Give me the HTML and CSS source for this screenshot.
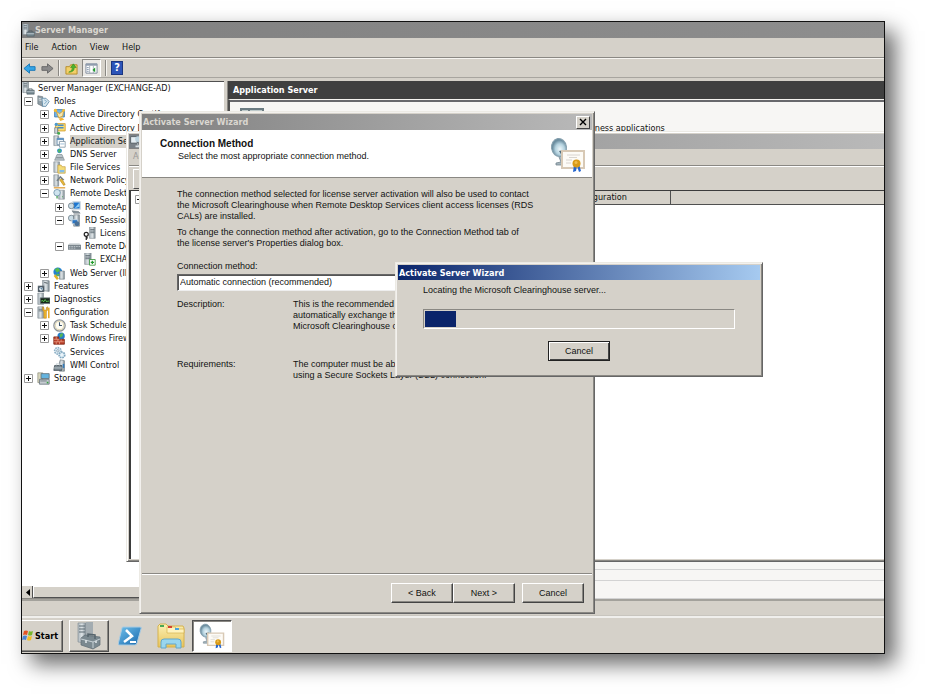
FILE: index.html
```html
<!DOCTYPE html>
<html lang="en">
<head>
<meta charset="utf-8">
<title>Server Manager</title>
<link rel="stylesheet" href="styles.css">
</head>
<body>
<svg class="defs" aria-hidden="true">
  <defs>
    <linearGradient id="gSteel" x1="0" x2="1"><stop offset="0" stop-color="#aab4ba"/><stop offset=".5" stop-color="#dfe5e8"/><stop offset="1" stop-color="#7d8a92"/></linearGradient>
    <linearGradient id="gBlue" x1="0" x2="1" y2="1"><stop offset="0" stop-color="#6fc0ea"/><stop offset="1" stop-color="#1868ae"/></linearGradient>
    <radialGradient id="gDish" cx=".55" cy=".6"><stop offset="0" stop-color="#eef8fb"/><stop offset=".6" stop-color="#b4d2df"/><stop offset="1" stop-color="#6c8ea0"/></radialGradient>
    <linearGradient id="gFold" x2="0" y2="1"><stop offset="0" stop-color="#fbf0b4"/><stop offset="1" stop-color="#e8c45c"/></linearGradient>
  </defs>
  <symbol id="manager" viewBox="0 0 16 16"><path d="M1 0h7v13H1z" fill="url(#gSteel)" stroke="#7d888e" stroke-width=".7"/><path d="M2 2h4M2 4h4M2 6h4" stroke="#56636b"/><path d="M6 10h9v5H6z" fill="#74868f" stroke="#4d5c64" stroke-width=".7"/><path d="M8.500 10V8.500h4V10" fill="none" stroke="#4d5c64"/><path d="M6 12h9" stroke="#c5d2d8"/></symbol>
  <symbol id="roles" viewBox="0 0 16 16"><path d="M1 1l6 1v12l-6-3z" fill="#8f9da5" stroke="#5d6a72" stroke-width=".7"/><path d="M2 4l4 1M2 6l4 1" stroke="#dfe6ea"/><path d="M6 4h5l4 4-4 6H7z" fill="#d9e8f0" stroke="#5b87a5"/><path d="M9 6l3 2-3 3" fill="none" stroke="#6b9fc0"/></symbol>
  <symbol id="adcs" viewBox="0 0 16 16"><path d="M2 2h12v9H2z" fill="#75b5e7" stroke="#3877ad"/><path d="M4 4l4 3 5-4-1 7-5 2z" fill="#f7e8ad" stroke="#d49a23"/><circle cx="3" cy="3" r="2" fill="#f6bc32"/><circle cx="13" cy="3" r="1.700" fill="#f6bc32"/><path d="M7 13l4-1 3 2-5 2z" fill="#f4b431"/></symbol>
  <symbol id="adds" viewBox="0 0 16 16"><path d="M3 2h12v9H3z" fill="#f8dd73" stroke="#d39a26"/><path d="M6 4h7M6 7h7" stroke="#4a8cc2" stroke-width="2"/><circle cx="4" cy="3" r="2" fill="#4a9ad4"/><path d="M2 7h4v7H2z" fill="url(#gSteel)" stroke="#566168" stroke-width=".6"/><circle cx="7" cy="14" r="1.800" fill="#3fa84b"/></symbol>
  <symbol id="appsrv" viewBox="0 0 16 16"><path d="M1 1h6v12H1z" fill="url(#gSteel)" stroke="#7d888e" stroke-width=".7"/><path d="M5 4h8v8H5z" fill="#eef4f8" stroke="#6489a8"/><path d="M5 5h8" stroke="#4f8ac0" stroke-width="2"/><path d="M8 8h7v7H8z" fill="#fff" stroke="#8296a5"/><path d="M9 11h5" stroke="#8ab2d0"/></symbol>
  <symbol id="dns" viewBox="0 0 16 16"><circle cx="8" cy="3.500" r="3" fill="#2d91cc"/><path d="M6 3l2-2 2 3-3 2z" fill="#55b661"/><path d="M5 8h6l3 7H2z" fill="#bac4ca" stroke="#7a868d" stroke-width=".8"/><path d="M4 12h8" stroke="#6b777e"/></symbol>
  <symbol id="files" viewBox="0 0 16 16"><path d="M1 1h7v13H1z" fill="url(#gSteel)" stroke="#7d888e" stroke-width=".7"/><path d="M6 5h4l1 2h4v8H6z" fill="#f5dc78" stroke="#c39b36" stroke-width=".8"/><path d="M8 11h6v3H8z" fill="#83bce7"/></symbol>
  <symbol id="nap" viewBox="0 0 16 16"><path d="M1 1h6v14H1z" fill="url(#gSteel)" stroke="#7d888e" stroke-width=".7"/><path d="M4 8l5-6 5 5-2 1-3-3-3 4z" fill="#768188"/><path d="M8 7l5 7 2-1-4-7z" fill="#e6b73b" stroke="#a57a16" stroke-width=".6"/></symbol>
  <symbol id="remote" viewBox="0 0 16 16"><path d="M1 1h14" stroke="#dd9a32" stroke-width="1.500"/><path d="M7 4h7v11H7z" fill="url(#gSteel)" stroke="#7d888e" stroke-width=".7"/><circle cx="5" cy="7" r="4" fill="#cfe3ee" stroke="#6c91a7"/><path d="M5 11v3M11 12h1" stroke="#3c9c4a" stroke-width="1.500"/></symbol>
  <symbol id="rdapp" viewBox="0 0 16 16"><path d="M6 1h9v9H6z" fill="#1c76d1" stroke="#cdd8df" stroke-width="1.500"/><path d="M8 9l6-7v5z" fill="#8ccbf5"/><circle cx="4" cy="6" r="3.500" fill="#cbdde6" stroke="#70808a"/><path d="M5 12l8 1 2 2H7z" fill="#8c98a0" stroke="#59656c" stroke-width=".6"/></symbol>
  <symbol id="rdsession" viewBox="0 0 16 16"><circle cx="4" cy="5" r="3.500" fill="#cbdde6" stroke="#70808a"/><path d="M7 1h7v14H7z" fill="url(#gSteel)" stroke="#606d75" stroke-width=".7"/><path d="M5 7h7v5H5z" fill="#2a75c4" stroke="#d4dee4"/><circle cx="11" cy="12" r="3" fill="#486f96"/></symbol>
  <symbol id="licensing" viewBox="0 0 16 16"><path d="M8 0h7v14H8z" fill="url(#gSteel)" stroke="#7d888e" stroke-width=".7"/><path d="M9 3h5M9 5h5M9 7h5" stroke="#56636b"/><circle cx="4" cy="9" r="2.500" fill="#fff" stroke="#242424" stroke-width="1.500"/><path d="M4 11v5M4 13.500h2" stroke="#242424" stroke-width="1.500"/></symbol>
  <symbol id="rack" viewBox="0 0 16 16"><path d="M0 6l2-2h12l2 2z" fill="#d1d6d9"/><path d="M0 6h16v6H0z" fill="#7b868d"/><path d="M1 8h14M1 10h9" stroke="#c6ced3" stroke-dasharray="2 1"/></symbol>
  <symbol id="serverok" viewBox="0 0 16 16"><path d="M2 0h8v14H2z" fill="url(#gSteel)" stroke="#7d888e" stroke-width=".7"/><path d="M3 3h6M3 5h6M3 7h6" stroke="#56636b"/><path d="M8 8h7v7H8z" fill="#fff" stroke="#35933a"/><path d="M11.500 9.500v4M9.500 11.500h4" stroke="#209c2c" stroke-width="1.500"/></symbol>
  <symbol id="web" viewBox="0 0 16 16"><circle cx="6" cy="6" r="5.500" fill="#2280cf"/><path d="M2 3l4-2 3 3-4 3zM4 8l4 1-2 3z" fill="#58bc4a"/><path d="M2 10l4 5" stroke="#e1b428" stroke-width="3"/><path d="M8 5h6v10H8z" fill="url(#gSteel)" stroke="#65737c" stroke-width=".7"/></symbol>
  <symbol id="features" viewBox="0 0 16 16"><path d="M7 0l8 1v13l-8-1z" fill="url(#gSteel)" stroke="#606c74" stroke-width=".7"/><path d="M9 3l4 1" stroke="#384349"/><path d="M1 7h8v8H1z" fill="#5d6970"/><circle cx="5" cy="11" r="3" fill="#edf3f6" stroke="#26384a"/><path d="M5 9v2h2" fill="none" stroke="#20567d"/></symbol>
  <symbol id="diag" viewBox="0 0 16 16"><path d="M1 0h7v14H1z" fill="url(#gSteel)" stroke="#7d888e" stroke-width=".7"/><path d="M4 6h12v7H4z" fill="#17271b" stroke="#69757b"/><path d="M5 10l2-1 1 2 2-3 2 3 1-1h2" fill="none" stroke="#61da5a"/></symbol>
  <symbol id="config" viewBox="0 0 16 16"><path d="M1 1h7v14H1z" fill="url(#gSteel)" stroke="#7d888e" stroke-width=".7"/><path d="M2 4h5M2 6h5" stroke="#56636b"/><path d="M7 1v4l1.500 2v8h3V7L13 5V1l-1.500 1v3h-3V2z" fill="#f0b72e" stroke="#bd8315" stroke-width=".7"/><path d="M14.500 2v13" stroke="#e9a926" stroke-width="2"/></symbol>
  <symbol id="clock" viewBox="0 0 16 16"><circle cx="8" cy="8" r="7" fill="#f3f0e3" stroke="#8d9398" stroke-width="1.500"/><circle cx="8" cy="8" r="5" fill="#fffdf5" stroke="#d9cfa8"/><path d="M8 4v4h3" fill="none" stroke="#39526c" stroke-width="1.300"/></symbol>
  <symbol id="firewall" viewBox="0 0 16 16"><circle cx="10" cy="5" r="4.500" fill="#257bcc"/><path d="M8 3l4-2v4l-3 2z" fill="#55b654"/><path d="M1 6h6v3h7v6H1z" fill="#bb4029" stroke="#7d2919"/><path d="M1 9h7M1 12h13M4 6v3M6 9v3M10 9v3M4 12v3M8 12v3" stroke="#edaa93" stroke-width=".8"/></symbol>
  <symbol id="services" viewBox="0 0 16 16"><circle cx="6" cy="6" r="4" fill="#e4f1f8" stroke="#91b2c7" stroke-width="2" stroke-dasharray="2 1"/><circle cx="6" cy="6" r="1.500" fill="#fff" stroke="#7798ad"/><circle cx="11" cy="11" r="3.500" fill="#dcecf5" stroke="#80a6be" stroke-width="2" stroke-dasharray="2 1"/><circle cx="11" cy="11" r="1" fill="#fff"/></symbol>
  <symbol id="wmi" viewBox="0 0 16 16"><path d="M9 1l5 1v13H8V4z" fill="url(#gSteel)" stroke="#5c6870" stroke-width=".7"/><path d="M2 8h9v6H1z" fill="#79878f" stroke="#46525a"/><path d="M4 8V6h4v2M1 11h10" fill="none" stroke="#c2ccd1"/><path d="M12 6h2v5h-2z" fill="#337bba"/></symbol>
  <symbol id="storage" viewBox="0 0 16 16"><path d="M1 1h6v12H1z" fill="#d9d7bd" stroke="#777966" stroke-width=".7"/><path d="M5 2h10v6H5z" fill="#65b4df" stroke="#61717a"/><path d="M3 9h12v6H3z" fill="#c5cbd0" stroke="#68747b"/><path d="M4 11h8" stroke="#69757b"/><path d="M12 13h2" stroke="#36a040" stroke-width="2"/></symbol>
  <symbol id="mmc" viewBox="0 0 16 16"><path d="M0 0h16v16H0z" fill="#7a8187"/><path d="M2 2h8v8H2z" fill="#e6eef2" stroke="#4c555b"/><circle cx="11" cy="5" r="3.500" fill="#bcd3df"/><path d="M9 8l2 5H8v2h7v-2h-3" fill="#d7dfe3"/></symbol>
  <symbol id="dish" viewBox="0 0 36 36"><path d="M9 20l2 5-5 1v2h10v-2l-3-2-1-7" fill="#a5b5bd" stroke="#74858f" stroke-width=".8"/><ellipse cx="9" cy="10.500" rx="7.500" ry="9" fill="url(#gDish)" stroke="#86a0ae" transform="rotate(-8 9 10.500)"/><path d="M9 14l5-1-2 6z" fill="#516b79"/><path d="M12 14h22v17H12z" fill="#fdfbf6" stroke="#d8c9b5" stroke-width="2"/><path d="M17 18h13M19 20.500h8M16 23h6M16 26h5" stroke="#cfccc6" stroke-width=".8"/><path d="M24 28l-1 7 3-1 1-5 2 6 2-1-2-7z" fill="#2465ce"/><circle cx="26.500" cy="26.500" r="4" fill="#d89a18"/><circle cx="26" cy="25.500" r="1.500" fill="#f0bd4a"/></symbol>
  <symbol id="toolbox" viewBox="0 0 28 28"><path d="M3 1h8v20l-8-1z" fill="url(#gSteel)" stroke="#8b9499" stroke-width=".7"/><path d="M4 4h6M4 7h6M4 10h6" stroke="#5d6a72"/><path d="M11 0h7v14h-7z" fill="#a3acb1"/><path d="M6 16l4-3 15 2v8l-7 4-12-4z" fill="#7b8990" stroke="#5f6c74" stroke-width=".7"/><path d="M6 17l12 3 7-3M18 20v6" fill="none" stroke="#c6d0d5"/><path d="M13 15v-3l7 1v4" fill="none" stroke="#56646c" stroke-width="1.500"/><path d="M11 18v3M21 19v2" stroke="#e4e9ec" stroke-width="1.500"/></symbol>
  <symbol id="flag" viewBox="0 0 12 12"><path d="M2 1q2-1 4 0L5 5Q3 4 1 5z" fill="#e35224"/><path d="M7 1q2 1 4 0l-1 4q-2 1-4 0z" fill="#77b62e"/><path d="M1 6q2-1 4 0l-1 4q-2-1-4 0z" fill="#4a83d2"/><path d="M6 6q2 1 4 0l-1 4q-2 1-4 0z" fill="#f2bd25"/></symbol>
  <symbol id="psh" viewBox="0 0 24 22"><path d="M5 2h17q2 0 1 2l-4 14q-.5 2-2 2H1q-1 0-.6-2L4 3q.3-1 1-1z" fill="url(#gBlue)" stroke="#a9cbe2"/><path d="M8 5l6 6-8 6" fill="none" stroke="#fff" stroke-width="2.500"/><path d="M12 17h6" stroke="#fff" stroke-width="2"/></symbol>
  <symbol id="explorer" viewBox="0 0 28 26"><path d="M1 3l2-2h6l2 2h15l1 2v19H1z" fill="url(#gFold)" stroke="#d5b14d"/><path d="M10 4h8l2 2h7v4H10z" fill="#fff3bd" stroke="#d5b14d" stroke-width=".7"/><path d="M3 3h4" stroke="#49a756" stroke-width="2"/><path d="M11 4h4" stroke="#d64130" stroke-width="2"/><path d="M18 6h4" stroke="#49a2dc" stroke-width="2"/><path d="M4 25v-6q0-3 3-3h14q3 0 3 3v6h-5v-4H9v4z" fill="#99d6ef" stroke="#62a7cb"/></symbol>
  <symbol id="arrow" viewBox="0 0 14 12"><path d="M1 6l6-5v3h6v4H7v3z"/></symbol>
  <symbol id="up" viewBox="0 0 14 14"><path d="M1 5h4l1-2h7v10H1z" fill="#f2d069" stroke="#b68d29"/><path d="M4 11q4-1 4-5H6l3-4 3 4h-2q0 5-6 5z" fill="#4bb52e" stroke="#2a851a" stroke-width=".6"/></symbol>
  <symbol id="console" viewBox="0 0 14 12"><path d="M1 1h12v10H1z" fill="#fff" stroke="#7a8698"/><path d="M1 2h12" stroke="#8f9cad" stroke-width="2"/><path d="M5 3v8M9 3v8" stroke="#a8b1ba"/><path d="M2 5h2M2 7h2M2 9h2" stroke="#8296ab"/><path d="M11 5v5L8 7.500z" fill="#1f9a2c"/></symbol>
  <symbol id="plus" viewBox="0 0 9 9"><path d="M.5.500h8v8h-8z" fill="#fff" stroke="#9a9a9a"/><path d="M2 4.500h5M4.500 2v5" stroke="#111"/></symbol>
  <symbol id="minus" viewBox="0 0 9 9"><path d="M.5.500h8v8h-8z" fill="#fff" stroke="#9a9a9a"/><path d="M2 4.500h5" stroke="#111"/></symbol>
</svg>

<main class="screen">
  <header class="titlebar inactive main-title"><svg class="icon"><use href="#manager"/></svg><h1>Server Manager</h1></header>
  <nav class="menubar"><button>File</button><button>Action</button><button>View</button><button>Help</button></nav>
  <div class="toolbar">
    <button class="tool" aria-label="Back"><svg class="icon back"><use href="#arrow"/></svg></button>
    <button class="tool" aria-label="Forward"><svg class="icon forward"><use href="#arrow"/></svg></button>
    <span class="sep"></span>
    <button class="tool" aria-label="Up"><svg class="icon"><use href="#up"/></svg></button>
    <button class="tool pressed" aria-label="Console tree"><svg class="icon"><use href="#console"/></svg></button>
    <span class="sep"></span>
    <button class="tool help" aria-label="Help">?</button>
  </div>

  <div class="workspace">
    <section class="tree-pane">
      <ul class="tree">
        <li class="l0"><svg class="icon"><use href="#manager"/></svg><span>Server Manager (EXCHANGE-AD)</span></li>
        <li class="l1"><svg class="tog"><use href="#minus"/></svg><svg class="icon"><use href="#roles"/></svg><span>Roles</span></li>
        <li class="l2"><svg class="tog"><use href="#plus"/></svg><svg class="icon"><use href="#adcs"/></svg><span>Active Directory Certif</span></li>
        <li class="l2"><svg class="tog"><use href="#plus"/></svg><svg class="icon"><use href="#adds"/></svg><span>Active Directory D</span></li>
        <li class="l2"><svg class="tog"><use href="#plus"/></svg><svg class="icon"><use href="#appsrv"/></svg><span class="selected">Application Server</span></li>
        <li class="l2"><svg class="tog"><use href="#plus"/></svg><svg class="icon"><use href="#dns"/></svg><span>DNS Server</span></li>
        <li class="l2"><svg class="tog"><use href="#plus"/></svg><svg class="icon"><use href="#files"/></svg><span>File Services</span></li>
        <li class="l2"><svg class="tog"><use href="#plus"/></svg><svg class="icon"><use href="#nap"/></svg><span>Network Policy</span></li>
        <li class="l2"><svg class="tog"><use href="#minus"/></svg><svg class="icon"><use href="#remote"/></svg><span>Remote Desktop</span></li>
        <li class="l3"><svg class="tog"><use href="#plus"/></svg><svg class="icon"><use href="#rdapp"/></svg><span>RemoteApp</span></li>
        <li class="l3"><svg class="tog"><use href="#minus"/></svg><svg class="icon"><use href="#rdsession"/></svg><span>RD Session</span></li>
        <li class="l4"><svg class="icon"><use href="#licensing"/></svg><span>Licensing</span></li>
        <li class="l3"><svg class="tog"><use href="#minus"/></svg><svg class="icon"><use href="#rack"/></svg><span>Remote Desktops</span></li>
        <li class="l4"><svg class="icon"><use href="#serverok"/></svg><span>EXCHANGE</span></li>
        <li class="l2"><svg class="tog"><use href="#plus"/></svg><svg class="icon"><use href="#web"/></svg><span>Web Server (IIS)</span></li>
        <li class="l1"><svg class="tog"><use href="#plus"/></svg><svg class="icon"><use href="#features"/></svg><span>Features</span></li>
        <li class="l1"><svg class="tog"><use href="#plus"/></svg><svg class="icon"><use href="#diag"/></svg><span>Diagnostics</span></li>
        <li class="l1"><svg class="tog"><use href="#minus"/></svg><svg class="icon"><use href="#config"/></svg><span>Configuration</span></li>
        <li class="l2"><svg class="tog"><use href="#plus"/></svg><svg class="icon"><use href="#clock"/></svg><span>Task Scheduler</span></li>
        <li class="l2"><svg class="tog"><use href="#plus"/></svg><svg class="icon"><use href="#firewall"/></svg><span>Windows Firewall</span></li>
        <li class="l2"><i class="tog"></i><svg class="icon"><use href="#services"/></svg><span>Services</span></li>
        <li class="l2"><i class="tog"></i><svg class="icon"><use href="#wmi"/></svg><span>WMI Control</span></li>
        <li class="l1"><svg class="tog"><use href="#plus"/></svg><svg class="icon"><use href="#storage"/></svg><span>Storage</span></li>
      </ul>
      <div class="hscroll"><button aria-label="Scroll left"><svg viewBox="0 0 5 7"><path d="M5 0v7L1 3.500z"/></svg></button><span class="thumb"></span></div>
    </section>
    <section class="detail">
      <h2>Application Server</h2>
      <div class="summary">
        <svg class="icon summary-icon" viewBox="0 0 24 24"><path d="M0 1h24v22H0z" fill="#6c7c82"/><path d="M2 4h6M10 4h12" stroke="#bdc9ca" stroke-width="2"/></svg>
        <p>business applications</p>
      </div>
      <div class="detail-foot"><span></span><span></span><span></span></div>
    </section>
  </div>
  <div class="statusbar"></div>

  <footer class="taskbar">
    <button class="start"><svg class="icon"><use href="#flag"/></svg>Start</button>
    <button class="task raised" aria-label="Server Manager"><svg class="icon"><use href="#toolbox"/></svg></button>
    <button class="task" aria-label="PowerShell"><svg class="icon ps"><use href="#psh"/></svg></button>
    <button class="task" aria-label="Explorer"><svg class="icon"><use href="#explorer"/></svg></button>
    <button class="task active" aria-label="Licensing Manager"><svg class="icon small"><use href="#dish"/></svg></button>
  </footer>

  <section class="window licensing">
    <header class="titlebar inactive"><svg class="icon"><use href="#mmc"/></svg></header>
    <div class="lic-menu">Action</div>
    <div class="lic-tools"><button aria-label="Refresh"></button></div>
    <div class="lic-body">
      <div class="lic-tree"><svg class="tog"><use href="#minus"/></svg></div>
      <table class="grid"><thead><tr><th>Configuration</th><th></th></tr></thead></table>
    </div>
  </section>

  <section class="window wizard" aria-label="Activate Server Wizard">
    <header class="titlebar inactive"><h2>Activate Server Wizard</h2><button class="close" aria-label="Close"><svg viewBox="0 0 8 8"><path d="M1 1l6 6M7 1L1 7" stroke="#000" stroke-width="1.400"/></svg></button></header>
    <div class="banner">
      <div><h3>Connection Method</h3><p>Select the most appropriate connection method.</p></div>
      <svg class="icon"><use href="#dish"/></svg>
    </div>
    <form class="wizard-body">
      <p>The connection method selected for license server activation will also be used to contact<br>the Microsoft Clearinghouse when Remote Desktop Services client access licenses (RDS<br>CALs) are installed.</p>
      <p>To change the connection method after activation, go to the Connection Method tab of<br>the license server's Properties dialog box.</p>
      <label for="method">Connection method:</label>
      <select id="method"><option>Automatic connection (recommended)</option></select>
      <dl>
        <dt>Description:</dt><dd>This is the recommended method. The server will<br>automatically exchange the information with the<br>Microsoft Clearinghouse over the Internet.</dd>
        <dt>Requirements:</dt><dd>The computer must be able to connect to the Internet<br>using a Secure Sockets Layer (SSL) connection.</dd>
      </dl>
    </form>
    <div class="wizard-foot"><button class="btn">&lt; Back</button><button class="btn">Next &gt;</button><button class="btn apart">Cancel</button></div>
  </section>

  <section class="window progress-window" aria-label="Activate Server Wizard progress">
    <header class="titlebar current"><h2>Activate Server Wizard</h2></header>
    <div class="progress-body">
      <label for="bar">Locating the Microsoft Clearinghouse server...</label>
      <progress id="bar" max="100" value="10"></progress>
      <button class="btn default">Cancel</button>
    </div>
  </section>
</main>
</body>
</html>
```
FILE: styles.css
```css
:root {
  --face: #d5d1c9;
  --light: #f6f4f0;
  --shade: #8a8883;
  --dark: #505050;
  --ui: "DejaVu Sans Condensed", "DejaVu Sans", sans-serif;
  --dialog: "Liberation Sans", sans-serif;
}
* { box-sizing: border-box; }
body {
  margin: 0;
  min-height: 100vh;
  padding: 21px 42px 42px 21px;
  display: flex;
  background: #fff;
  font: 9px/13px var(--ui);
  color: #111;
}
h1, h2, h3, p, ul, dl, dd { margin: 0; padding: 0; }
button, select { font: inherit; color: inherit; }
button { padding: 0; border: 0; background: none; }
.defs { position: absolute; width: 0; height: 0; }
.icon { flex: none; width: 13px; height: 13px; display: block; }

.screen {
  flex: 1;
  position: relative;
  display: flex;
  flex-direction: column;
  border: 1px solid #111;
  background: var(--face);
  box-shadow: 10px 10px 20px 0 rgba(0, 0, 0, .6);
}
.titlebar { display: flex; align-items: center; height: 16px; flex: none; }
.titlebar h1, .titlebar h2 { padding-left: 1px; font: bold 9px/14px var(--ui); }
.inactive { background: linear-gradient(90deg, #808080, #b9b9b9); color: #dad7d0; }
.current { background: linear-gradient(90deg, #0a246a, #a6caf0); color: #fff; }
.main-title { background: linear-gradient(90deg, #808080, #8e8e8e); }
.main-title h1 { padding-left: 0; }

.menubar { display: flex; height: 20px; padding-left: 3px; gap: 13px; border-bottom: 1px solid var(--shade); }
.toolbar {
  display: flex;
  align-items: center;
  height: 20px;
  gap: 4px;
  border-top: 1px solid var(--light);
  border-bottom: 1px solid #a8a59f;
}
.tool { display: flex; align-items: center; justify-content: center; width: 14px; height: 18px; }
.back { fill: #35a5e6; stroke: #1777b8; }
.forward { fill: #8a8a8a; stroke: #666; transform: scaleX(-1); }
.sep { width: 2px; height: 16px; border-left: 1px solid var(--shade); border-right: 1px solid var(--light); }
.pressed { width: 19px; background: #eceae6; border: 1px solid; border-color: var(--shade) #fff #fff var(--shade); }
.help { height: 14px; width: 12px; background: #2c54b8; border: 1px solid #1a3580; color: #fff; font: bold 11px/12px var(--ui); }

.workspace { flex: 1; display: flex; gap: 3px; padding-top: 3px; min-height: 0; }
.tree-pane { width: 202px; display: flex; flex-direction: column; background: #fff; border-top: 1px solid var(--dark); overflow: hidden; }
.tree { display: grid; grid-auto-rows: 1fr; height: 303px; list-style: none; white-space: nowrap; }
.tree li { display: flex; align-items: center; gap: 4px; min-height: 0; }
.tree .l0 { gap: 3px; }
.l1 { padding-left: 2px; }
.l2 { padding-left: 18px; }
.l3 { padding-left: 33px; }
.l4 { padding-left: 61px; }
.tog { flex: none; width: 9px; height: 9px; display: block; }
.selected { background: var(--face); }
.hscroll { margin-top: auto; height: 13px; display: flex; background: var(--face); border-bottom: 1px solid var(--shade); }
.hscroll button { width: 11px; display: flex; align-items: center; justify-content: center; border-right: 1px solid var(--dark); }
.hscroll svg { width: 5px; height: 7px; }
.thumb { flex: 1; border: 1px solid; border-color: #fff var(--dark) var(--dark) #fff; }

.detail { flex: 1; display: flex; flex-direction: column; border-left: 1px solid var(--shade); background: #f7f6f4; }
.detail h2 { height: 18px; padding-left: 5px; background: #404040; color: #fff; font: bold 9px/18px var(--ui); }
.summary { flex: 1; border-top: 1px solid var(--light); border-left: 2px solid var(--dark); padding-left: 10px; display: flex; gap: 314px; box-shadow: inset 0 2px #68686c; }
.summary-icon { width: 24px; height: 24px; margin-top: 7px; }
.summary p { margin-top: 22px; }
.detail-foot { height: 40px; display: grid; grid-template-rows: 11px 11px 1fr; }
.detail-foot span { border-bottom: 1px solid #d3d3d3; }
.statusbar { height: 17px; border-top: 2px solid #a3a19b; border-bottom: 1px solid #c8c5be; }

.taskbar { display: flex; align-items: center; height: 37px; border-top: 2px solid #f0efec; }
.task { display: flex; align-items: center; justify-content: center; width: 40px; height: 32px; margin-right: 1px; }
.task .icon { width: 28px; height: 28px; }
.task .ps { width: 24px; height: 24px; }
.task .small { width: 26px; height: 26px; }
.start { display: flex; align-items: center; gap: 1px; width: 41px; height: 32px; margin-right: 6px; font: bold 9px/14px var(--ui); color: #000; }
.start .icon { width: 12px; height: 12px; }
.start, .raised { border: 1px solid; border-color: #fff var(--dark) var(--dark) #fff; box-shadow: inset -1px -1px var(--shade); }
.start { border-left: 0; }
.active { background: #fff; border: 1px solid; border-color: var(--dark) #fff #fff var(--dark); box-shadow: inset 1px 1px var(--shade); }

.window {
  position: absolute;
  display: flex;
  flex-direction: column;
  background: var(--face);
  border: 1px solid;
  border-color: #eceae4 #666 #666 #eceae4;
  padding: 2px;
  box-shadow: inset 1px 1px #f3f1ee, inset -1px -1px var(--shade);
}
.licensing { left: 104px; top: 109px; right: 0; height: 431px; border-right: 0; padding-right: 0; box-shadow: inset 1px 1px #fff, inset 0 -1px var(--shade); }
.licensing .titlebar { height: 15px; }
.lic-menu { height: 17px; padding: 1px 4px; color: #999; border-bottom: 1px solid var(--shade); }
.lic-tools { height: 24px; padding: 2px 4px; border-top: 1px solid #fff; }
.lic-tools button { width: 20px; height: 20px; border: 1px solid; border-color: #fff var(--dark) var(--dark) #fff; }
.lic-body { flex: 1; display: flex; background: #fff; border-top: 1px solid #3c3c3c; border-left: 2px solid #3c3c3c; }
.lic-tree { width: 320px; padding: 4px; }
.grid { flex: 1; align-self: flex-start; border-collapse: collapse; table-layout: fixed; background: var(--face); }
.grid th { height: 13px; padding: 0; font-weight: normal; line-height: 12px; text-align: left; border-bottom: 1px solid var(--dark); }
.grid th:first-child { width: 219px; padding-left: 121px; border-right: 1px solid var(--dark); }

.wizard { left: 117px; top: 89px; width: 456px; height: 503px; font: 9px/11px var(--dialog); }
.close { margin-left: auto; margin-right: 2px; width: 14px; height: 13px; display: flex; align-items: center; justify-content: center; background: var(--face); border: 1px solid; border-color: #fff #444 #444 #fff; }
.close svg { width: 8px; height: 8px; }
.banner { display: flex; justify-content: space-between; height: 48px; padding: 7px 6px 0 18px; background: #fff; border-bottom: 1px solid var(--shade); }
.banner h3 { font: bold 10px/13px var(--dialog); }
.banner p { padding-left: 18px; line-height: 12px; }
.banner .icon { width: 36px; height: 36px; }
.wizard-body { flex: 1; display: flex; flex-direction: column; padding: 11px 24px 0 35px; white-space: nowrap; }
.wizard-body p { margin-bottom: 5px; }
.wizard-body label { margin-top: 6px; line-height: 12px; }
.wizard-body select { appearance: none; height: 17px; margin-top: 2px; padding: 0 2px; border: 1px solid; border-color: #666 #eee #eee #666; border-radius: 0; background: #fff; box-shadow: inset 1px 1px #555; }
.wizard-body dl { display: grid; grid-template-columns: 116px 1fr; grid-template-rows: 60px auto; margin-top: 8px; }
.wizard-foot { display: flex; justify-content: flex-end; height: 38px; padding: 9px 8px 0; border-top: 1px solid var(--shade); box-shadow: inset 0 1px #fff; }
.btn { width: 62px; height: 20px; border: 1px solid; border-color: #fff #444 #444 #fff; box-shadow: inset -1px -1px var(--shade); }
.apart { margin-left: 7px; }

.progress-window { left: 373px; top: 240px; width: 368px; height: 115px; font: 9px/12px var(--dialog); }
.progress-window .titlebar { height: 15px; }
.progress-body { display: flex; flex-direction: column; padding: 4px 25px 0; }
progress { appearance: none; width: 100%; height: 20px; margin: 13px 0 12px; border: 1px solid; border-color: var(--shade) #fff #fff var(--shade); padding: 1px; background: var(--face); }
progress::-webkit-progress-bar { background: var(--face); }
progress::-webkit-progress-value { background: #0a246a; }
.default { align-self: center; border-color: #222; box-shadow: inset 1px 1px #fff, inset -1px -1px #444; }
```
